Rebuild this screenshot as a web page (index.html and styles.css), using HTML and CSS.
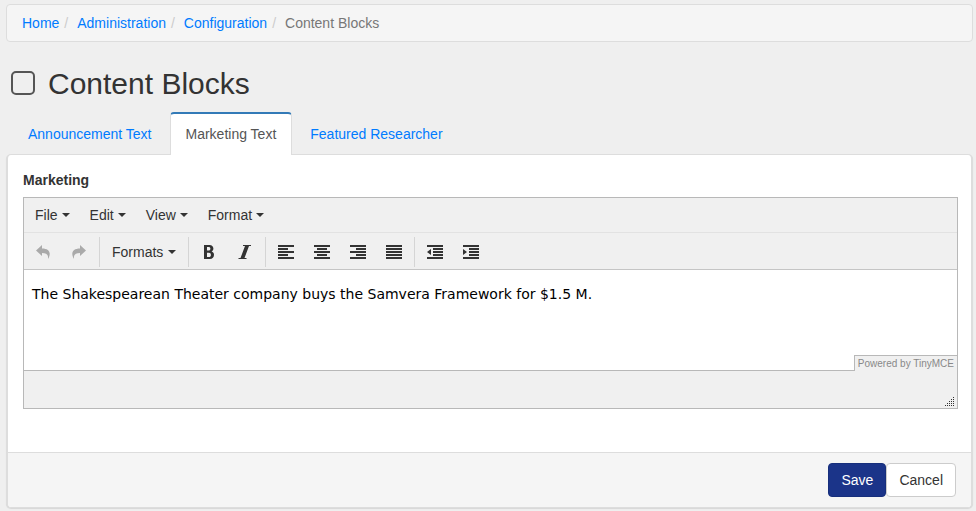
FILE: index.html
```html
<!DOCTYPE html>
<html lang="en">
<head>
<meta charset="utf-8">
<title>Content Blocks</title>
<link rel="stylesheet" href="styles.css">
</head>
<body>
<nav aria-label="Breadcrumb">
  <ol class="breadcrumb">
    <li><a href="#">Home</a></li>
    <li><a href="#">Administration</a></li>
    <li><a href="#">Configuration</a></li>
    <li class="current">Content Blocks</li>
  </ol>
</nav>
<main>
  <h1 class="page-title">
    <svg class="title-icon" viewBox="0 0 24 26" aria-hidden="true"><rect x="1" y="1" width="22" height="22" rx="4" fill="none" stroke="#555" stroke-width="2"/></svg>
    Content Blocks
  </h1>
  <ul class="tabs">
    <li><a href="#">Announcement Text</a></li>
    <li class="active"><a href="#">Marketing Text</a></li>
    <li><a href="#">Featured Researcher</a></li>
  </ul>
  <form class="panel">
    <div class="panel-body">
      <label class="field-label" for="marketing">Marketing</label>
      <div class="editor">
        <div class="menubar">
          <button type="button">File<i class="caret"></i></button>
          <button type="button">Edit<i class="caret"></i></button>
          <button type="button">View<i class="caret"></i></button>
          <button type="button">Format<i class="caret"></i></button>
        </div>
        <div class="toolbar">
          <div class="group">
            <button type="button" class="tool" aria-label="Undo" disabled><svg viewBox="0 0 16 16"><path d="M1 6.500 7 1v3.500c6 0 8.500 3 7.500 7-.3 1.500-.8 2.500-1.500 3.500.5-4-1-6-6-6V12z"/></svg></button>
            <button type="button" class="tool" aria-label="Redo" disabled><svg viewBox="0 0 16 16"><path d="M15 6.500 9 1v3.500c-6 0-8.500 3-7.500 7 .3 1.500.8 2.500 1.500 3.500-.5-4 1-6 6-6V12z"/></svg></button>
          </div>
          <div class="group">
            <button type="button">Formats<i class="caret"></i></button>
          </div>
          <div class="group">
            <button type="button" class="tool" aria-label="Bold"><svg viewBox="0 0 16 16"><path fill-rule="evenodd" d="M3 1h5.500c2.400 0 3.900 1.500 3.900 3.600 0 1.400-.7 2.400-1.800 2.900 1.500.4 2.400 1.600 2.400 3.200C13 13.300 11.500 15 8.800 15H3zM6 3v3.600h1.500c1.200 0 1.900-.6 1.900-1.800S8.700 3 7.500 3zM6 8.700V13h1.900c1.300 0 2-.7 2-2.100s-.7-2.200-2-2.200z"/></svg></button>
            <button type="button" class="tool" aria-label="Italic"><svg viewBox="0 0 16 16"><path d="M6 1h8v1h-2L7.500 14h2v1h-8v-1h2L8 2H6z"/></svg></button>
          </div>
          <div class="group">
            <button type="button" class="tool" aria-label="Align left"><svg viewBox="0 0 16 16"><path d="M0 1h16v2H0zM0 4h10v2H0zM0 7h16v2H0zM0 10h10v2H0zM0 13h16v2H0z"/></svg></button>
            <button type="button" class="tool" aria-label="Align center"><svg viewBox="0 0 16 16"><path d="M0 1h16v2H0zM3 4h10v2H3zM0 7h16v2H0zM3 10h10v2H3zM0 13h16v2H0z"/></svg></button>
            <button type="button" class="tool" aria-label="Align right"><svg viewBox="0 0 16 16"><path d="M0 1h16v2H0zM6 4h10v2H6zM0 7h16v2H0zM6 10h10v2H6zM0 13h16v2H0z"/></svg></button>
            <button type="button" class="tool" aria-label="Justify"><svg viewBox="0 0 16 16"><path d="M0 1h16v2H0zM0 4h16v2H0zM0 7h16v2H0zM0 10h16v2H0zM0 13h16v2H0z"/></svg></button>
          </div>
          <div class="group">
            <button type="button" class="tool" aria-label="Decrease indent"><svg viewBox="0 0 16 16"><path d="M0 1h16v2H0zM6 4h10v2H6zM6 7h10v2H6zM6 10h10v2H6zM0 13h16v2H0zM4 5v6L0 8z"/></svg></button>
            <button type="button" class="tool" aria-label="Increase indent"><svg viewBox="0 0 16 16"><path d="M0 1h16v2H0zM6 4h10v2H6zM6 7h10v2H6zM6 10h10v2H6zM0 13h16v2H0zM0 5v6l4-3z"/></svg></button>
          </div>
        </div>
        <div class="edit-area">
          <textarea id="marketing" spellcheck="false">The Shakespearean Theater company buys the Samvera Framework for $1.5 M.</textarea>
          <a class="powered" href="#">Powered by TinyMCE</a>
        </div>
        <div class="statusbar">
          <svg class="grip" viewBox="0 0 10 10" aria-hidden="true"><path d="M8 0h1v1H8zM6 2h1v1H6zM8 2h1v1H8zM4 4h1v1H4zM6 4h1v1H6zM8 4h1v1H8zM2 6h1v1H2zM4 6h1v1H4zM6 6h1v1H6zM8 6h1v1H8zM0 8h1v1H0zM2 8h1v1H2zM4 8h1v1H4zM6 8h1v1H6zM8 8h1v1H8z"/></svg>
        </div>
      </div>
    </div>
    <div class="panel-footer">
      <button type="submit" class="btn primary">Save</button>
      <button type="button" class="btn">Cancel</button>
    </div>
  </form>
</main>
</body>
</html>
```
FILE: styles.css
```css
* { box-sizing: border-box; }

body {
  margin: 0;
  padding: 4px 3px 2px 6px;
  background: #efefef;
  color: #333;
  font: 14px/20px "Liberation Sans", Arial, sans-serif;
}

a { color: #007bff; text-decoration: none; }

button { font: inherit; color: inherit; }

.breadcrumb {
  display: flex;
  margin: 0;
  padding: 8px 15px;
  border: 1px solid #ddd;
  border-radius: 4px;
  background: #f5f5f5;
  list-style: none;
}

.breadcrumb li + li::before {
  content: "/";
  padding: 0 9px 0 5px;
  color: #ccc;
}

.breadcrumb .current { color: #777; }

.page-title {
  display: flex;
  align-items: center;
  gap: 13px;
  margin: 24px 0 10px;
  padding-left: 5px;
  font-size: 30px;
  line-height: 36px;
  font-weight: 400;
}

.title-icon { width: 24px; height: 26px; }

.tabs {
  display: flex;
  gap: 2px;
  margin: 0;
  padding: 0 6px;
  list-style: none;
}

.tabs a {
  display: block;
  padding: 10px 15px;
  border: 1px solid transparent;
  border-top-width: 2px;
  border-bottom: 0;
  border-radius: 4px 4px 0 0;
}

.tabs .active { position: relative; margin-bottom: -1px; }

.tabs .active a {
  padding-bottom: 11px;
  border-color: #337ab7 #ddd;
  background: #fff;
  color: #555;
}

.panel {
  border: 1px solid #ddd;
  border-left-width: 2px;
  border-right-width: 2px;
  border-radius: 5px;
  background: #fff;
  box-shadow: 0 1px 1px rgba(0, 0, 0, 0.1);
  overflow: hidden;
}

.panel-body { padding: 15px 13px 43px 15px; }

.field-label {
  display: block;
  margin-bottom: 7px;
  font-weight: 700;
}

.editor { border: 1px solid #b8b8b8; background: #f0f0f0; }

.menubar {
  display: flex;
  padding: 0 1px;
  border-bottom: 1px solid #e2e2e2;
}

.menubar button,
.toolbar button {
  display: flex;
  align-items: center;
  justify-content: center;
  gap: 4px;
  padding: 7px 10px;
  border: 0;
  background: none;
}

.toolbar button { gap: 5px; }

.caret {
  border: 4px solid transparent;
  border-top-color: #333;
  border-bottom: 0;
}

.toolbar {
  display: flex;
  padding: 4px 0 2px;
  border-bottom: 1px solid #c5c5c5;
}

.group {
  display: flex;
  align-items: center;
  height: 30px;
  padding: 0 2px;
}

.group:first-child { padding-left: 1px; }

.group + .group { border-left: 1px solid #d5d5d5; }

.toolbar .tool { width: 36px; }

.tool svg { width: 16px; height: 16px; fill: #333; }

.tool:disabled svg { fill: #aaa; }

.edit-area { position: relative; background: #fff; }

textarea {
  display: block;
  width: 100%;
  height: 101px;
  padding: 14px 8px;
  border: 0;
  border-bottom: 1px solid #b8b8b8;
  background: #fff;
  color: #000;
  font: 14px/20px Verdana, "DejaVu Sans", sans-serif;
  resize: none;
  outline: 0;
}

.powered {
  position: absolute;
  right: 0;
  bottom: 0;
  padding: 0 3px;
  border: solid #b8b8b8;
  border-width: 1px 0 0 1px;
  background: #f0f0f0;
  color: #888;
  font: 10px/15px "Liberation Sans", Arial, sans-serif;
}

.statusbar {
  display: flex;
  align-items: flex-end;
  justify-content: flex-end;
  height: 37px;
  padding: 1px 2px;
}

.grip { width: 10px; height: 10px; fill: #333; }

.panel-footer {
  display: flex;
  justify-content: flex-end;
  padding: 10px 15px;
  border-top: 1px solid #ddd;
  background: #f5f5f5;
}

.btn {
  padding: 6px 12px;
  border: 1px solid #ccc;
  border-radius: 4px;
  background: #fff;
}

.btn.primary {
  border-color: #172f7c;
  background: #1b3489;
  color: #fff;
}
```
